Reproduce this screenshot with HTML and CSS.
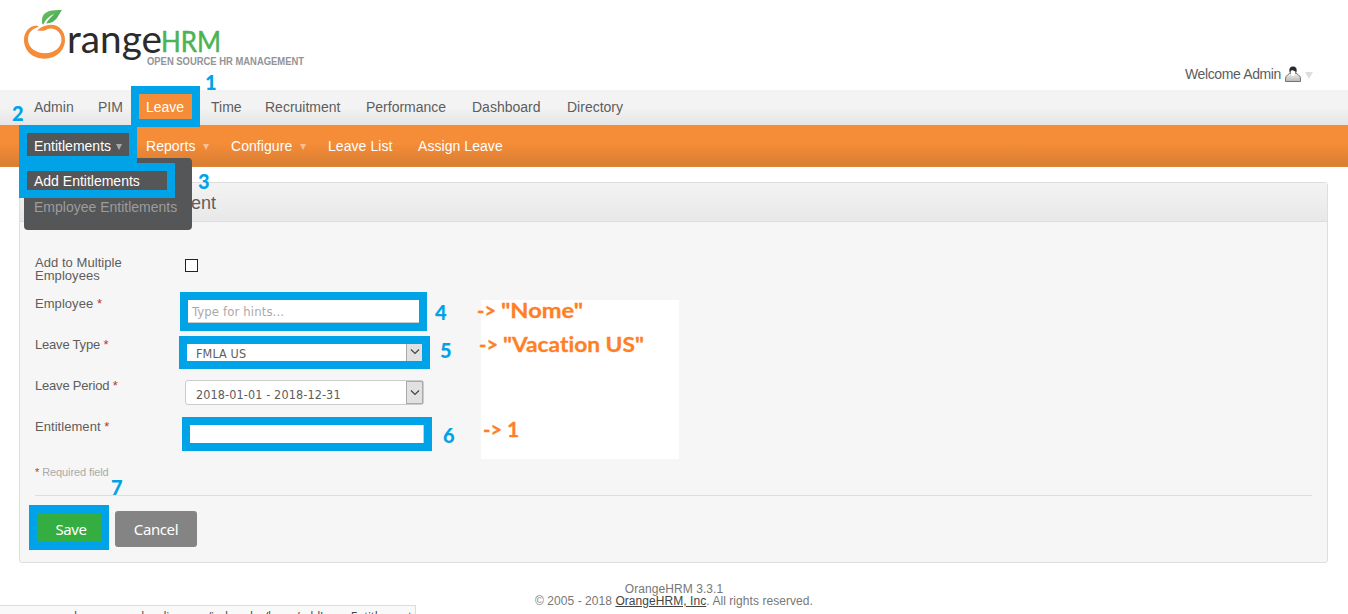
FILE: index.html
```html
<!DOCTYPE html>
<html lang="en">
<head>
<meta charset="utf-8">
<title>OrangeHRM</title>
<link rel="stylesheet" href="styles.css">
</head>
<body>
<div class="page">
  <header class="header">
    <svg class="logo" width="320" height="80" viewBox="0 0 320 80">
      <defs><linearGradient id="leaf" x1="0" y1="0" x2="1" y2="1"><stop offset="0" stop-color="#6cc25e"/><stop offset="1" stop-color="#3da556"/></linearGradient></defs>
      <path fill="#f58c38" d="M36.500 25.500C29 26 24 32 24 40C24 51 33 58.700 44.500 58.700C56 58.700 65 50.500 65 40C65 31 59 24.800 51 24.800C46 24.800 41 27 37 30.500C40 30.300 42 31 44 30.700C47 30 48 28.300 51.500 28.500C57.500 29 61.500 34 61.500 39.500C61.500 47.500 54 53.300 45 53.300C36 53.300 28 47.500 28 39.500C28 33 32 28.500 38.500 27Q38 25.700 36.500 25.500Z"/>
      <path fill="url(#leaf)" d="M42 21.500C41.500 12 49 9.500 62 10C58 15 57 23 46 23.500C48.500 19.500 51 17 54.500 13.500C49 16.500 45.500 19.500 43.500 24.500C42.500 24.500 42 23.500 42 21.500Z"/>
      <text class="logo-range" x="67" y="52.500" textLength="95" lengthAdjust="spacingAndGlyphs">range</text>
      <text class="logo-hrm" x="161" y="52" textLength="60" lengthAdjust="spacingAndGlyphs">HRM</text>
      <text class="logo-tag" x="147" y="65" textLength="157" lengthAdjust="spacingAndGlyphs">OPEN SOURCE HR MANAGEMENT</text>
    </svg>
    <div class="welcome">
      <span class="welcome-name">Welcome Admin</span>
      <svg width="16" height="17" viewBox="0 0 16 17">
        <defs><linearGradient id="coat" x1="0" y1="0" x2="0" y2="1"><stop offset="0" stop-color="#f4f2f0"/><stop offset="1" stop-color="#bab7b3"/></linearGradient></defs>
        <path d="M.5 15.500V13Q.5 10 2.500 9L5 7H11L13.500 9Q15.500 10 15.500 13V15.500Z" fill="url(#coat)" stroke="#77736e"/>
        <path d="M4.500 6Q3.500 .5 8 .5Q12.500 .5 11.500 6L10 8H6Z" fill="#292929"/>
        <path d="M5.500 5.500L7 4L10.500 5.500Q10.500 9.500 8 10Q5.500 9.500 5.500 5.500Z" fill="#fff"/>
      </svg>
      <i class="caret caret-grey"></i>
    </div>
  </header>
  <nav class="nav">
    <a>Admin</a><a>PIM</a><a class="on">Leave</a><a>Time</a><a>Recruitment</a><a>Performance</a><a>Dashboard</a><a>Directory</a>
  </nav>
  <nav class="subnav">
    <a class="current">Entitlements<i class="caret"></i></a><a>Reports<i class="caret"></i></a><a>Configure<i class="caret"></i></a><a>Leave List</a><a>Assign Leave</a>
    <div class="menu"><a class="hot">Add Entitlements</a><a>Employee Entitlements</a></div>
  </nav>
  <main class="panel">
    <h1 class="title">Add Leave Entitlement</h1>
    <form class="form">
      <div class="row"><span class="label">Add to Multiple<br>Employees</span><span class="check"></span></div>
      <div class="row"><span class="label">Employee <em>*</em></span><span class="field hint">Type for hints...</span></div>
      <div class="row"><span class="label tight">Leave Type <em>*</em></span><span class="field select">FMLA US<span class="drop"><svg width="10" height="6"><path d="M1 .5L5 4.500L9 .5"/></svg></span></span></div>
      <div class="row"><span class="label tight">Leave Period <em>*</em></span><span class="field select"><span>2018-01-01 - 2018-12-31</span><span class="drop"><svg width="10" height="6"><path d="M1 .5L5 4.500L9 .5"/></svg></span></span></div>
      <div class="row"><span class="label">Entitlement <em>*</em></span><span class="field"></span></div>
      <p class="required"><em>*</em> Required field</p>
      <div class="buttons"><span class="btn save">Save</span><span class="btn cancel">Cancel</span></div>
    </form>
  </main>
  <footer class="footer"><div class="version">OrangeHRM 3.3.1</div><div class="rights">© 2005 - 2018 <u>OrangeHRM, Inc</u>. All rights reserved.</div></footer>
  <div class="status">opensource.demo.orangehrmlive.com/index.php/leave/addLeaveEntitlement</div>
  <svg class="notes" width="1348" height="614" viewBox="0 0 1348 614">
    <rect class="patch" x="481" y="300" width="198" height="159"/>
    <g class="frames">
      <rect x="135" y="90" width="61" height="33"/>
      <rect x="23" y="129" width="110" height="31"/>
      <rect x="23" y="167" width="148" height="27"/>
      <rect x="184" y="296" width="239" height="31"/>
      <rect x="183" y="340" width="243" height="25"/>
      <rect x="186" y="421" width="242" height="26"/>
      <rect x="33" y="509" width="72" height="37"/>
    </g>
    <g class="steps">
      <text x="205" y="90">1</text><text x="12" y="121">2</text><text x="198" y="189">3</text><text x="435" y="320">4</text><text x="440" y="358">5</text><text x="443" y="443">6</text><text x="111" y="495">7</text>
    </g>
    <g class="values">
      <text x="477" y="318" textLength="19" lengthAdjust="spacingAndGlyphs">-&gt;</text>
      <text x="501" y="318" textLength="82" lengthAdjust="spacingAndGlyphs">"Nome"</text>
      <text x="479" y="352" textLength="19" lengthAdjust="spacingAndGlyphs">-&gt;</text>
      <text x="503" y="352" textLength="141" lengthAdjust="spacingAndGlyphs">"Vacation US"</text>
      <text x="483" y="437" textLength="19" lengthAdjust="spacingAndGlyphs">-&gt;</text>
      <text x="507" y="437">1</text>
    </g>
  </svg>
</div>
</body>
</html>
```
FILE: styles.css
```css
* { box-sizing: border-box; }
body { margin: 0; background: #fff; overflow: hidden; }
.page { position: relative; width: 1348px; height: 614px; overflow: hidden; font-family: "Liberation Sans", Arial, sans-serif; color: #5d5d5d; }
em { font-style: normal; color: #b53a2c; }
.header { height: 90px; display: flex; justify-content: space-between; }
.logo-range { font: 39px Lato, sans-serif; fill: #2b2b2b; }
.logo-hrm { font: 28px Lato, sans-serif; fill: #4bb256; stroke: #4bb256; stroke-width: .5px; }
.logo-tag { font: bold 10px "Liberation Sans", sans-serif; fill: #929497; }
.welcome { display: flex; align-items: center; height: 20px; margin: 64px 35px 0 0; font-size: 14px; letter-spacing: -.38px; }
.welcome-name { width: 100px; white-space: nowrap; }
.caret { display: inline-block; border: 3px solid transparent; border-top: 6px solid #fac095; border-bottom: 0; margin-left: 8px; vertical-align: 1px; }
.caret-grey { border-width: 7px 4px 0; border-top-color: #dedede; margin: 3px 0 0 4px; }
.nav { height: 35px; padding-left: 34px; display: grid; grid-template-columns: 64px 48px 65px 54px 101px 106px 95px 100px; align-items: center; background: linear-gradient(#f3f3f3 50%, #e5e5e5); font-size: 14px; }
.nav a { line-height: 35px; padding-bottom: 1px; height: 35px; }
.nav .on { margin-left: -11px; padding-left: 11px; margin-right: 12px; background: #f58c38; color: #fff; }
.subnav { position: relative; height: 42px; padding-left: 34px; display: grid; grid-template-columns: 112px 85px 97px 90px 100px; background: linear-gradient(#f58c38 45%, #d87e32); border-bottom: 1px solid #e28437; color: #fff; font-size: 14px; line-height: 42px; letter-spacing: .06px; white-space: nowrap; }
.subnav .current { margin: 6px 14px 0 -8px; padding-left: 8px; line-height: 30px; background: #555658; letter-spacing: 0; }
.current .caret { border-top-color: #aaa; margin-left: 5px; }
.menu { position: absolute; left: 24px; top: 33px; width: 168px; height: 72px; padding: 11px 10px; border-radius: 0 4px 4px 4px; background: #555658; color: #9c9c9c; display: flex; flex-direction: column; line-height: 26px; z-index: 2; letter-spacing: 0; }
.menu .hot { color: #fff; line-height: 25px; }
.panel { margin: 15px 20px 0 19px; height: 381px; border: 1px solid #dedede; border-radius: 3px; background: #f6f6f6; }
.title { margin: 0; height: 39px; padding-left: 15px; font-size: 18px; font-weight: normal; line-height: 41px; background: linear-gradient(#f3f3f3, #e8e8e8); border-bottom: 1px solid #dedede; }
.form { padding: 34px 15px 0; }
.row { display: flex; height: 41px; font-size: 13px; line-height: 13px; }
.label { width: 150px; letter-spacing: .05px; }
.tight { letter-spacing: -.2px; }
.check { width: 13px; height: 13px; margin: 3px 0 0; border: 1px solid #222; background: #fff; }
.row .field { width: 239px; height: 25px; margin-top: 1px; border: 1px solid #ccc; border-radius: 3px; background: #fff; font: 12.500px/27px "DejaVu Sans Condensed", "DejaVu Sans", sans-serif; letter-spacing: .12px; }
.row .hint { padding-left: 6px; color: #aaa; line-height: 25px; font-size: 13px; }
.select { display: flex; justify-content: space-between; padding-left: 10px; }
.drop { width: 17px; height: 23px; border: 1px solid #aaa; background: #e1e1e1; display: flex; align-items: center; justify-content: center; }
.drop path { fill: none; stroke: #444; stroke-width: 1.200; }
.required { margin: 5px 0 0; height: 30px; line-height: 12px; font-size: 11px; letter-spacing: -.1px; color: #aaa; border-bottom: 1px solid #dedede; }
.buttons { display: flex; gap: 12px; padding-top: 15px; }
.btn { height: 36px; border-radius: 3px; color: #fff; text-align: center; font: 15px/37px "Noto Sans", sans-serif; letter-spacing: -.4px; }
.save { width: 68px; padding-left: 4px; background: #35ae41; }
.cancel { width: 82px; background: #848484; }
.footer { margin-top: 20px; text-align: center; font-size: 12px; line-height: 12px; color: #777; letter-spacing: .06px; }
.footer u { color: #444; }
.status { position: absolute; left: 0; top: 605px; width: 416px; height: 20px; padding-left: 4px; border: 1px solid #dcdcdc; border-left: 0; background: #f9f9f9; color: #444; font: 12px/21px "Open Sans", sans-serif; letter-spacing: -.33px; white-space: nowrap; }
.notes { position: absolute; left: 0; top: 0; z-index: 3; }
.patch { fill: #fff; }
.frames rect { fill: none; stroke: #00a2e8; stroke-width: 8; }
.steps text { font: 900 20px Lato, sans-serif; fill: #00a2e8; }
.values text { font: 700 21px Lato, sans-serif; font-variant-ligatures: none; fill: #ff7f27; stroke: #ff7f27; stroke-width: .3px; }
```
